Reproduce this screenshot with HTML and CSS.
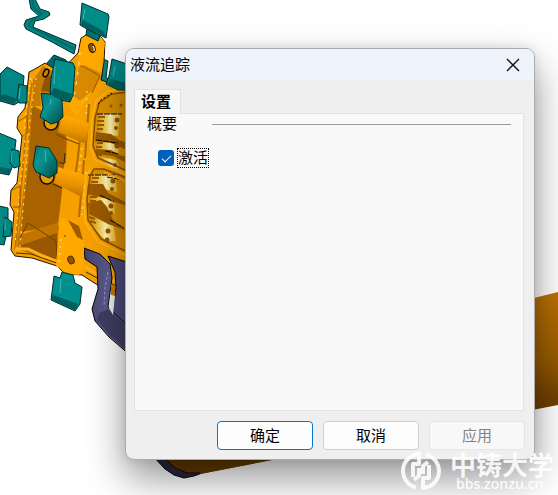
FILE: index.html
```
<!DOCTYPE html>
<html lang="zh-CN">
<head>
<meta charset="utf-8">
<meta name="viewport" content="width=device-width, initial-scale=1">
<title>液流追踪</title>
<link rel="stylesheet" href="styles.css">
</head>
<body>
<svg class="scene" width="558" height="495" viewBox="0 0 558 495" aria-hidden="true">
  <defs>
    <linearGradient id="rod" x1="0" y1="0" x2="0.08" y2="1">
      <stop offset="0" stop-color="#c47700"/><stop offset=".45" stop-color="#965a00"/><stop offset=".65" stop-color="#704200"/><stop offset="1" stop-color="#6e4100"/>
    </linearGradient>
    <linearGradient id="boss" x1=".2" y1="0" x2="0" y2="1">
      <stop offset="0" stop-color="#ffad00"/><stop offset=".5" stop-color="#e69100"/><stop offset="1" stop-color="#a96200"/>
    </linearGradient>
    <linearGradient id="cup" x1="0" y1="0" x2="1" y2="1">
      <stop offset="0" stop-color="#007775"/><stop offset=".4" stop-color="#079492"/><stop offset="1" stop-color="#004846"/>
    </linearGradient>
    <linearGradient id="pipe" x1="0" y1="0" x2="1" y2="0">
      <stop offset="0" stop-color="#424068"/><stop offset=".7" stop-color="#68659c"/><stop offset="1" stop-color="#4c4976"/>
    </linearGradient>
    <linearGradient id="port" x1="0" y1="0" x2="1" y2="0">
      <stop offset="0" stop-color="#d58a00"/><stop offset=".35" stop-color="#f0c84c"/><stop offset=".6" stop-color="#fff6b4"/><stop offset="1" stop-color="#eeb52c"/>
    </linearGradient>
  </defs>

  <!-- shot sleeve -->
  <path d="M152 455 165 469 174 475 184 478 194 476 202 473 184 450z" fill="#29283d" stroke="#050505"/>
  <path d="M166 380 534 298 558 292V405L200 474 186 473 175 469 167 459z" fill="url(#rod)"/>
  <path d="M167 455H290L271 460 200 474 187 473 175 468z" fill="#633b00"/>
  <path d="M166 459 175 468 187 473 200 473" fill="none" stroke="#080500"/>

  <!-- upper runner and rear overflow blocks -->
  <path d="M29-1 31 9 39 16 26 20 24 25 26 29 52 42 74 54 76 45 33 27 35 21 44 19 50 15 49 12 40 9 35-1z" fill="#008583" stroke="#002a29"/>
  <path d="M32 0 34 8 42 14 30 22 29 26 74 49" fill="none" stroke="#006a68" stroke-width="2"/>
  <path d="M47 63 54 55 66 60 68 80 51 84z" fill="#006b69" stroke="#003130"/>
  <path d="M103 59 108 61 106 78 127 86V95L101 87z" fill="#008583" stroke="#003130"/>

  <!-- housing -->
  <path d="M29 72 35 69 45 63 60 72 78 53 81 38 86 35 101 37 105 42 104 62 101 80 116 85 130 93V294L110 289 96 284 82 275 65 274 57 266 32 258 15 256 11 250 14 212 10 205 11 190 17 183 22 136 17 128 18 117 25 108 27 91z" fill="#f6a100" stroke="#241400"/>
  <path d="M32 105 67 125 66 140 61 210 58 226 21 232z" fill="#a86300"/>
  <path d="M17 236 59 222 58 262 19 250z" fill="#c17400"/>
  <path d="M18 246 57 233 58 263z" fill="#995800"/>
  <path d="M20 238 28 223 56 241 57 258" fill="none" stroke="#704100"/>
  <path d="M33 80 43 66 54 72 52 94 40 92 41 106 33 106z" fill="#c87a00"/>
  <path d="M45 78 51 75 51 92 41 91z" fill="#8e5200"/>
  <path d="M32 83 28 112 24 155 19 213 15 250M37 83 31 110 28 160 22 210 18 247" fill="none" stroke="#c47700" stroke-width="2"/>
  <path d="M31 78 25 119 25 150 20 184 15 245M36 78 30 121 25 185 20 247" fill="none" stroke="#ffe6a0" stroke-dasharray="2 5"/>
  <path d="M19 121 27 116 28 132 22 137M12 190 20 186 20 207 13 207" fill="none" stroke="#9b5900"/>
  <path d="M15 249 28 249 43 256 58 262M85 267 100 276 124 284" fill="none" stroke="#ffb218" stroke-width="3"/>
  <path d="M16 253 31 254 45 259 60 264M86 272 103 281 126 289" fill="none" stroke="#4a2900"/>

  <!-- top mounting lug -->
  <path d="M79 52 82 38 88 35 101 37 105 43 101 75 77 116 65 99 75 87z" fill="#ffa900"/>
  <path d="M79 67 84 65 101 73 95 88 80 101 72 95z" fill="#d98a00"/>
  <path d="M80 66 84 67 100 76 92 93" fill="none" stroke="#985600"/>
  <path d="M80 52 78 72 74 98" fill="none" stroke="#fff0aa" stroke-dasharray="3 7"/>
  <ellipse cx="92" cy="48" rx="3" ry="4.500" transform="rotate(-20 92 48)" fill="#945500" stroke="#2b1700"/>
  <path d="M93 46q2 2 1 5" fill="none" stroke="#fff"/>
  <ellipse cx="46" cy="73" rx="2.500" ry="4" transform="rotate(25 46 73)" fill="#c98100" stroke="#050505" stroke-width="1.500"/>

  <!-- cover wall and gasket face -->
  <path d="M66 115 89 122 84 161 80 207 80 233 58 225 67 150z" fill="#f5a000"/>
  <path d="M80 140 76 172M66 138 65 163M84 160 79 217M89 104 85 158" fill="none" stroke="#b26b00" stroke-width="2"/>
  <path d="M82 148 79 170M87 91 86 118M86 172 82 215" fill="none" stroke="#fff0a0" stroke-dasharray="2 5"/>
  <path d="M127 92 112 94 99 103 95 118 93 146 98 158 127 171z" fill="#dc9100"/>
  <path d="M127 178 104 169 94 169 90 176 87 200 88 220 101 239 127 252z" fill="#dc9100"/>
  <g fill="url(#port)">
    <path d="M98 114 120 114 118 136 96 134z"/>
    <path d="M97 140 118 142 119 153 96 150z"/>
    <path d="M97 156 116 160 119 166 102 159z"/>
    <path d="M90 175 116 175 117 192 89 186z"/>
    <path d="M89 195 114 198 115 214 90 205z"/>
    <path d="M90 215 113 221 116 241 106 241 92 226z"/>
    <path d="M104 161 120 168 117 169 100 163z"/>
  </g>
  <g fill="#9b5b00">
    <path d="M96 132 111 134 119 140 127 143V150L111 143 95 141z"/>
    <path d="M96 149 111 150 119 155 127 157V163L113 156 96 154z"/>
    <path d="M88 184 103 184 108 193 127 203V206L107 199 87 194z"/>
    <path d="M88 203 101 200 107 207 113 220 127 231 108 224 89 214z"/>
  </g>
  <g fill="none" stroke="#9b5b00" stroke-width="2">
    <path d="M98 117h7M97 121h7M97 125h7M97 129h6M97 143h6M96 147h6M97 155h5"/>
    <path d="M92 178h7M91 182h7M90 197h7M90 201h6M89 217l6 2M90 221l6 2"/>
  </g>
  <g fill="none" stroke="#080500">
    <path d="M97 114H122M96 140 104 141 118 143M105 151 119 154M88 175H116M107 177 123 180M100 195 114 202M110 220 124 228" stroke-dasharray="6 1"/>
  </g>
  <g fill="#945600">
    <circle cx="117" cy="120" r="2.500"/><circle cx="116" cy="128" r="2"/><circle cx="117" cy="146" r="2.500"/><circle cx="115" cy="165" r="2"/>
    <circle cx="113" cy="181" r="2.500"/><circle cx="112" cy="189" r="2"/><circle cx="111" cy="206" r="2.500"/><circle cx="111" cy="213" r="2"/>
    <circle cx="108" cy="231" r="2.500"/><circle cx="107" cy="240" r="2.500"/><circle cx="111" cy="106" r="1.500"/><circle cx="121" cy="105" r="1.500"/>
  </g>
  <path d="M127 92 112 94 99 103 95 118 93 146 98 158 127 171M127 178 104 169 94 169 90 176 87 200 88 220 101 239 127 252" fill="none" stroke="#854e00" stroke-width="1.500"/>
  <path d="M127 88 108 91 96 101 92 118 91 148 95 160 127 175M127 182 104 172M90 169 86 177 84 200 85 222 98 242 127 256" fill="none" stroke="#ffb31a" stroke-width="1.500"/>
  <path d="M112 93 101 100 97 106" fill="none" stroke="#080500" stroke-dasharray="2 2"/>

  <!-- cylindrical bosses -->
  <circle cx="51" cy="123" r="7" fill="#e89a00" stroke="#111" stroke-width="1.500"/>
  <path d="M62 115 89 123 86 144 58 132z" fill="url(#boss)"/>
  <path d="M56 134 66 139 79 144" fill="none" stroke="#6d3e00"/>
  <circle cx="47" cy="177" r="7" fill="#e89a00" stroke="#111" stroke-width="1.500"/>
  <path d="M58 167 85 175 82 197 54 183z" fill="url(#boss)"/>
  <path d="M53 184 62 188M59 162 64 164 65 153" fill="none" stroke="#3c2100"/>

  <!-- runners -->
  <path d="M108 256 130 263V333L117 326 112 315 116 288 115 272z" fill="#4d4b77" stroke="#050505"/>
  <path d="M84 248 100 254 110 264 112 278 108 307 130 328V355L109 337 95 321 92 309 98 289 97 267 85 259z" fill="url(#pipe)" stroke="#050505"/>
  <path d="M108 309 130 329V353L111 337 97 320 99 313z" fill="#403e62"/>
  <path d="M108 272 105 288 104 306" fill="none" stroke="#9b99cf" stroke-dasharray="3 2"/>
  <path d="M111 296 115 296 113 315 109 308z" fill="#eee"/>
  <path d="M111 284 115 286 115 296 111 295z" fill="#c47c00"/>

  <!-- lower mounting lug -->
  <path d="M60 218 74 221 79 226 84 244 84 266 79 275 68 274 56 266 58 238z" fill="#ffa900"/>
  <path d="M68 220 79 226 83 240 77 237z" fill="#9d5c00"/>
  <path d="M61 239 59 263" stroke="#fff0aa" stroke-dasharray="2 5"/>
  <ellipse cx="71" cy="260" rx="3" ry="4" transform="rotate(-25 71 260)" fill="#955500" stroke="#4b2900"/>
  <circle cx="65" cy="236" r=".7" fill="#111"/>

  <!-- front overflow blocks -->
  <g stroke="#002d2c" stroke-width="1">
    <path d="M87 28 101 34 98 41 86 35z" fill="#00716f"/>
    <path d="M82 3 108 14 109 17 106 38 87 29 80 25z" fill="#008c89"/>
    <path d="M7 67 24 76 22 100 14 105 0 101V74z" fill="#008886"/>
    <path d="M19 84 27 86 27 103 19 103 17 99z" fill="#008886"/>
    <path d="M55 59 73 63 75 68 73 95 70 102 56 99 50 94 51 79z" fill="#008f8c"/>
    <path d="M41 93 57 95 62 101 63 117 58 122 51 124 40 117 43 108z" fill="url(#cup)"/>
    <path d="M112 59 127 64V90L118 90 106 84 109 76z" fill="#008886"/>
    <path d="M-1 133 16 140 13 165 9 175-1 173z" fill="#008c89"/>
    <path d="M12 149 19 151 20 166 14 168 10 163z" fill="#008c89"/>
    <path d="M36 146 49 148 57 161 57 173 49 178 36 172 33 165z" fill="url(#cup)"/>
    <path d="M-1 206 8 208 8 228 4 245-1 244z" fill="#008886"/>
    <path d="M5 217 12 222 11 236 3 237z" fill="#008886"/>
    <path d="M54 276 60 278 62 272 73 275 75 283 82 287 80 304 75 311 51 300z" fill="#00908d"/>
  </g>
  <g fill="#005e5c">
    <path d="M83 20 103 31 106 37 100 34 89 29 81 25z"/>
    <path d="M54 88 72 94 70 101 56 98 50 94z"/>
    <path d="M5 94 17 99 14 104 0 100V96z"/>
    <path d="M111 79 126 83V89L118 89 107 84z"/>
    <path d="M0 167 11 169 9 174 0 172z"/>
    <path d="M53 295 78 304 75 310 51 300z"/>
  </g>
  <g fill="none" stroke="#45b4b0">
    <path d="M85 9 83 19M55 66 54 84M20 88 19 99M51 99 50 105M115 66 113 76M12 151 11 162M45 150 46 162M61 279 60 293M5 219V230"/>
  </g>
</svg>

<main class="dialog" role="dialog" aria-labelledby="dialog-title">
  <header class="titlebar">
    <h1 id="dialog-title" class="title">液流追踪</h1>
    <button class="close" type="button" aria-label="关闭">
      <svg width="14" height="14" viewBox="0 0 14 14"><path d="M1 1 13 13M13 1 1 13" fill="none" stroke="#111" stroke-width="1.400"/></svg>
    </button>
  </header>
  <div class="content">
    <div class="tabs" role="tablist">
      <button class="tab" type="button" role="tab" aria-selected="true">设置</button>
    </div>
    <section class="panel" role="tabpanel">
      <div class="group-head"><h2 class="group-title">概要</h2><span class="rule"></span></div>
      <div class="option">
        <input class="check" type="checkbox" id="active" checked>
        <label class="check-label" for="active">激活</label>
      </div>
    </section>
    <footer class="actions">
      <button class="btn btn-default" type="button">确定</button>
      <button class="btn" type="button">取消</button>
      <button class="btn" type="button" disabled>应用</button>
    </footer>
  </div>
</main>

<div class="watermark">
  <svg class="mark" width="40" height="40" viewBox="0 0 40 40" aria-hidden="true">
    <g fill="none" stroke="#fff" stroke-width="4">
      <path d="M18 3A17 17 0 0 0 15 36.500M22 37A17 17 0 0 0 25 3.500"/>
      <path d="M18 1V13H12V26M18 17V25L13 29" stroke-linejoin="round"/>
      <path d="M22 39V27H28V14M22 23V15L27 11" stroke-linejoin="round"/>
    </g>
  </svg>
  <div class="brand"><span class="brand-name">中铸大学</span><span class="brand-url">bbs.zonzu.cn</span></div>
</div>
</body>
</html>
```

FILE: styles.css
```
* { box-sizing: border-box; }

body {
  margin: 0;
  min-height: 100vh;
  padding: 48px 23px 35px 125px;
  position: relative;
  overflow: hidden;
  background: #fff;
  color: #000;
  font: 15px/20px "Liberation Sans", "Noto Sans CJK SC", sans-serif;
}

.scene {
  position: absolute;
  top: 0;
  left: 0;
}

.dialog {
  position: relative;
  display: flex;
  flex-direction: column;
  min-height: calc(100vh - 83px);
  border: 1px solid #acacac;
  border-radius: 9px;
  background: #efefef;
  box-shadow: 0 18px 38px rgba(0, 0, 0, .42), 0 0 12px rgba(0, 0, 0, .1);
}

.titlebar {
  display: flex;
  align-items: center;
  justify-content: space-between;
  height: 31px;
  padding: 0 7px 0 4px;
  border-radius: 8px 8px 0 0;
  background: #eff3fb;
}

.title,
.group-title {
  margin: 0;
  font-size: 15px;
  font-weight: 400;
}

.close {
  display: grid;
  place-items: center;
  width: 28px;
  height: 28px;
  padding: 0;
  border: 0;
  background: none;
}

.content {
  flex: 1;
  display: flex;
  flex-direction: column;
  padding: 9px 9px 9px 8px;
}

.tabs {
  display: flex;
  position: relative;
  z-index: 1;
}

.tab {
  height: 25px;
  margin-bottom: -1px;
  padding: 0 9px 0 6px;
  border: 1px solid #e2e2e2;
  border-bottom: 0;
  background: #f9f9f9;
  color: #000;
  font: bold 15px/20px "Liberation Sans", "Noto Sans CJK SC", sans-serif;
}

.panel {
  flex: 1;
  margin-right: 1px;
  border: 1px solid #e2e2e2;
  background: #f9f9f9;
}

.group-head {
  display: flex;
  align-items: center;
  gap: 35px;
  padding: 0 12px;
}

.rule {
  flex: 1;
  height: 1px;
  background: #999;
}

.option {
  display: flex;
  align-items: center;
  gap: 3px;
  padding: 14px 23px;
}

.check {
  appearance: none;
  width: 16px;
  height: 16px;
  margin: 0;
  border-radius: 3px;
  background: #005fb8;
  display: grid;
  place-items: center;
}

.check:checked::before {
  content: "";
  width: 8px;
  height: 4px;
  margin-bottom: 2px;
  border: solid #fff;
  border-width: 0 0 1px 1px;
  transform: rotate(-45deg);
}

.check-label {
  border: 1px dotted #000;
  line-height: 18px;
}

.actions {
  display: flex;
  justify-content: flex-end;
  gap: 10px;
  padding-top: 10px;
}

.btn {
  width: 96px;
  height: 29px;
  padding: 0;
  border: 1px solid #cfcfcf;
  border-radius: 4px;
  background: #fdfdfd;
  color: #000;
  font: 15px/20px "Liberation Sans", "Noto Sans CJK SC", sans-serif;
}

.btn-default { border-color: #0078d4; }

.btn:disabled {
  border-color: #e5e5e5;
  background: #f8f8f8;
  color: #838383;
}

.watermark {
  position: absolute;
  right: 4px;
  bottom: 4px;
  display: flex;
  align-items: center;
  gap: 9px;
  color: #fff;
  opacity: .88;
}

.brand {
  display: flex;
  flex-direction: column;
}

.brand-name {
  font: bold 26px/27px "Noto Sans CJK SC", sans-serif;
}

.brand-url {
  padding-left: 6px;
  font: 600 14px/14px "Open Sans", sans-serif;
}
```
